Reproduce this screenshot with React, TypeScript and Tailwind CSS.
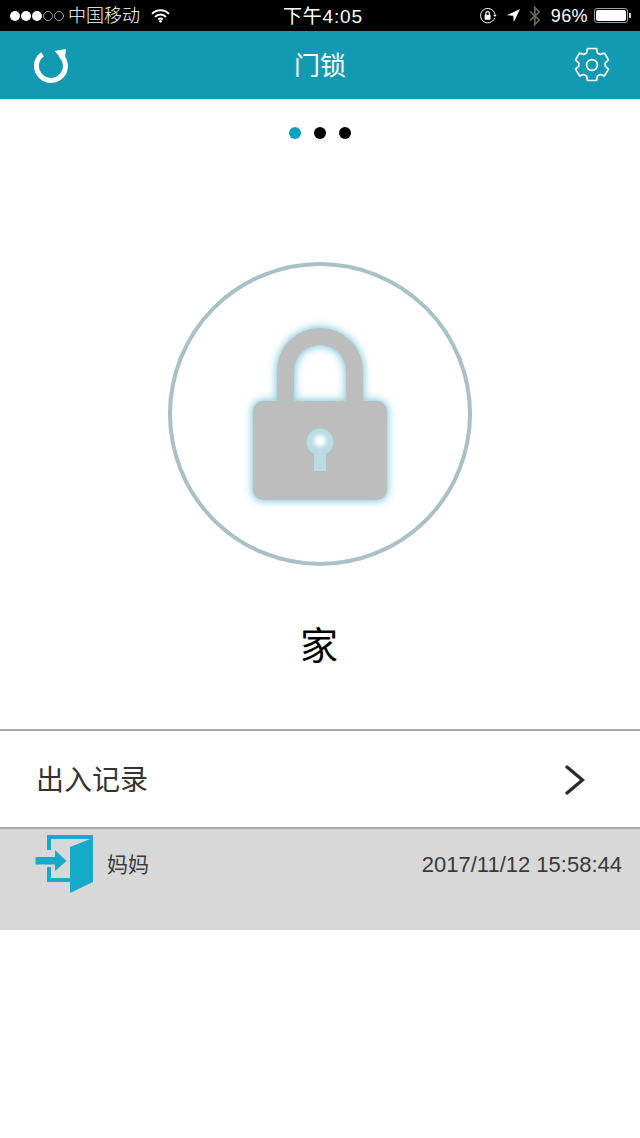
const font = "font-['Liberation_Sans','Noto_Sans_CJK_SC',sans-serif]";

function StatusBar() {
  return (
    <div className="h-[31px] bg-black text-white flex items-center justify-between relative">
      <div className="flex items-center pl-[10px]">
        <div className="flex gap-[1px]">
          <span className="w-[10px] h-[10px] rounded-full bg-white" />
          <span className="w-[10px] h-[10px] rounded-full bg-white" />
          <span className="w-[10px] h-[10px] rounded-full bg-white" />
          <span className="w-[10px] h-[10px] rounded-full border border-gray-400" />
          <span className="w-[10px] h-[10px] rounded-full border border-gray-400" />
        </div>
        <span className="ml-[4px] text-[18px] leading-none font-light">中国移动</span>
        <svg className="ml-[11px]" width="19" height="14" viewBox="0 0 20 15" fill="none" stroke="white" strokeWidth="2.2">
          <path d="M1 5.2a12.5 12.5 0 0 1 18 0" />
          <path d="M4.2 8.4a8 8 0 0 1 11.6 0" />
          <path d="M7.6 11.2a3.6 3.6 0 0 1 4.8 0" />
          <circle cx="10" cy="13.2" r="1.4" fill="white" stroke="none" />
        </svg>
      </div>
      <span className="absolute left-[283px] top-[6px] text-[19px] leading-[21px] tracking-[0.8px]">下午4:05</span>
      <div className="flex items-center pr-[9px]">
        <svg width="18" height="18" viewBox="0 0 18 18" fill="none" stroke="white" strokeWidth="1">
          <path d="M15.6 11a7.2 7.2 0 1 1 .4-2.4" />
          <path d="M14.2 8h3.4l-1.7 2z" fill="white" stroke="none" />
          <rect x="5.6" y="7.8" width="6" height="5" rx="0.8" fill="white" stroke="none" />
          <path d="M6.8 8V6.4a1.8 1.800 0 0 1 3.600 0V8" strokeWidth="1.2" />
        </svg>
        <svg className="ml-[10px]" width="13" height="13" viewBox="0 0 14 14" fill="white">
          <path d="M14 0 0 6.600l6.600.8.8 6.600z" />
        </svg>
        <svg className="ml-[9px]" width="12" height="20" viewBox="0 0 12 20" fill="none" stroke="#6b6b6b" strokeWidth="1.6">
          <path d="M1 5.500 10.200 14 5.800 18.600V1.400L10.200 6 1 14.500" />
        </svg>
        <span className="ml-[10px] text-[18px] leading-none tracking-[0.4px]">96%</span>
        <div className="ml-[6px] w-[34px] h-[15px] rounded-[3px] border border-gray-400 p-[1px]">
          <div className="w-full h-full rounded-[2px] bg-white" />
        </div>
        <span className="ml-[1px] w-[2px] h-[5px] bg-gray-300" />
      </div>
    </div>
  );
}

function Header() {
  return (
    <div className="h-[69px] bg-[#129ab2] grid grid-cols-[1fr_auto_1fr] items-center px-[30px] border-b border-[#d9eef2]">
      <svg className="ml-[4px] mt-[1px]" width="34" height="34" viewBox="0 0 34 34" fill="none">
        <path d="M8.500 5.200A14.500 14.500 0 1 0 26 5.700" stroke="white" strokeWidth="5" />
        <path d="M20.500 2 32 0 30.500 13z" fill="white" />
      </svg>
      <span className="text-[26px] leading-none text-white mt-[1px]">门锁</span>
      <svg className="justify-self-end mb-[1px]" width="36" height="36" viewBox="0 0 36 36" fill="none" stroke="white" strokeWidth="1.700" strokeLinejoin="round">
        <path d="M13.500 1.500h9l.9 4.400 2.800 1.600 4.300-1.400 4 6.800-3.300 3v3.200l3.300 3-4 6.800-4.300-1.400-2.800 1.600-.9 4.400h-9l-.9-4.400-2.800-1.600-4.300 1.400-4-6.800 3.300-3v-3.200l-3.300-3 4-6.800 4.300 1.400 2.800-1.600z" />
        <circle cx="18" cy="18" r="5.400" />
      </svg>
    </div>
  );
}

function Lock() {
  return (
    <svg
      className="[filter:drop-shadow(0_0_3px_#8ccfe0)_drop-shadow(0_0_5px_#b5e0ea)]"
      width="134"
      height="172"
      viewBox="0 0 134 172"
    >
      <path
        fillRule="evenodd"
        fill="#bdbdbd"
        d="M24 73V43a43 43 0 0 1 86 0v30h14a10 10 0 0 1 10 10v79a10 10 0 0 1-10 10H10a10 10 0 0 1-10-10V83a10 10 0 0 1 10-10zM41 73h52V43a26 26 0 0 0-52 0z"
      />
      <path fill="#b8dbe4" d="M61 126a13.500 13.500 0 1 1 12 0v17H61z" />
      <circle className="blur-[2px]" cx="67" cy="113" r="6" fill="#ffffff" />
    </svg>
  );
}

export default function App() {
  return (
    <div className={`w-[640px] h-[1138px] bg-white overflow-hidden ${font}`}>
      <StatusBar />
      <Header />

      {/* page dots */}
      <div className="flex justify-center gap-[13px] pt-[27px]">
        <span className="w-[12px] h-[12px] rounded-full bg-[#0a9fc0]" />
        <span className="w-[12px] h-[12px] rounded-full bg-black" />
        <span className="w-[12px] h-[12px] rounded-full bg-black" />
      </div>

      <div className="mt-[123px] mx-auto w-[304px] h-[304px] rounded-full border-[4px] border-[#a9c0c5] flex items-center justify-center">
        <Lock />
      </div>

      <div className="mt-[57px] pr-[2px] text-center text-[38px] leading-[46px] text-black">家</div>

      <div className="mt-[60px] h-[100px] border-y-2 border-[#a8a8a8] flex items-center justify-between pl-[36px] pr-[55px]">
        <span className="text-[28px] leading-none text-[#333333] mt-[4px]">出入记录</span>
        <svg className="mt-[2px]" width="20" height="30" viewBox="0 0 20 30" fill="none" stroke="#2b2b2b" strokeWidth="3.400" strokeLinecap="round">
          <path d="M2 2 17.500 15 2 28" />
        </svg>
      </div>

      {/* latest record */}
      <div className="h-[101px] bg-[#d8d8d8] flex items-start pl-[35px] pr-[18px] pt-[6px]">
        <svg width="59" height="59" viewBox="0 0 59 59" fill="#14aac8">
          <path d="M12 0H58V4H16V15H12z" />
          <path d="M12 32h4v11h19v4H12z" />
          <path d="M35 12 58 3V47L35 58z" />
          <path d="M.5 22H20V15L31.500 26 20 36V29.500H.5z" />
        </svg>
        <span className="ml-[13px] mt-[19px] text-[21px] leading-none text-[#3a3a3a]">妈妈</span>
        <span className="ml-auto mt-[19px] text-[22px] leading-none text-[#3a3a3a]">2017/11/12 15:58:44</span>
      </div>
    </div>
  );
}
